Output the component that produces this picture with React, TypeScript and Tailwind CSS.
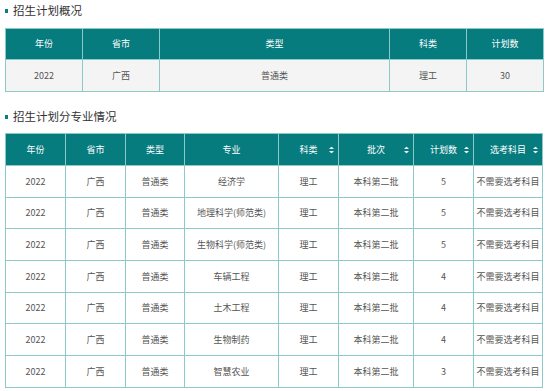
import React from "react";

const font = { fontFamily: '"Noto Sans CJK SC", "Noto Sans", sans-serif' };

function SortIcon() {
  return (
    <svg width="5" height="7" viewBox="0 0 5 7" className="absolute right-[4px] top-1/2 -translate-y-1/2">
      <path d="M2.5 0 L5 2.6 L0 2.6 Z" fill="#e6f3f3" />
      <path d="M2.5 7 L5 4.4 L0 4.4 Z" fill="#e6f3f3" />
    </svg>
  );
}

function Title({ text }: { text: string }) {
  return (
    <div className="flex items-center h-[22px] pl-[5px]">
      <span className="w-[3px] h-[4px] bg-[#0a7d80] mr-[5px]" />
      <span className="text-[11.5px] text-[#333]">{text}</span>
    </div>
  );
}

const rows = [
  { m: "经济学", n: "5", h: "h-[32px]" },
  { m: "地理科学(师范类)", n: "5", h: "h-[31px]" },
  { m: "生物科学(师范类)", n: "5", h: "h-[32px]" },
  { m: "车辆工程", n: "4", h: "h-[32px]" },
  { m: "土木工程", n: "4", h: "h-[31px]" },
  { m: "生物制药", n: "4", h: "h-[32px]" },
  { m: "智慧农业", n: "3", h: "h-[32px]" },
];

const heads2 = [
  { t: "年份", w: "w-[60px]" },
  { t: "省市", w: "w-[60px]" },
  { t: "类型", w: "w-[59px]" },
  { t: "专业", w: "w-[94px]" },
  { t: "科类", w: "w-[60px]", s: true },
  { t: "批次", w: "w-[75px]", s: true },
  { t: "计划数", w: "w-[60px]", s: true },
  { t: "选考科目", w: "w-[69px]", s: true },
];

export default function App() {
  return (
    <div className="w-[550px] h-[391px] bg-white overflow-hidden" style={font}>
      <Title text="招生计划概况" />

      <table className="ml-[5px] mt-[6px] w-[538px] border-collapse table-fixed text-[9px] text-center">
        <thead>
          <tr className="bg-[#077c7f] text-white">
            {["年份", "省市", "类型", "科类", "计划数"].map((h, i) => (
              <th
                key={h}
                className={`font-normal h-[31px] border border-[#8ccaca] ${i === 2 ? "w-[230px]" : "w-[77px]"}`}
              >
                {h}
              </th>
            ))}
          </tr>
        </thead>
        <tbody>
          <tr className="bg-[#f4f4f4] text-[#555]">
            {["2022", "广西", "普通类", "理工", "30"].map((c, i) => (
              <td key={i} className="h-[32px] border border-[#8ccaca]">
                {c}
              </td>
            ))}
          </tr>
        </tbody>
      </table>

      <div className="mt-[14px]">
        <Title text="招生计划分专业情况" />
      </div>

      <table className="ml-[5px] mt-[5px] w-[537px] border-collapse table-fixed text-[9px] text-center">
        <thead>
          <tr className="bg-[#077c7f] text-white">
            {heads2.map((h) => (
              <th key={h.t} className={`relative font-normal h-[32px] border border-[#8ccaca] ${h.w}`}>
                {h.t}
                {h.s && <SortIcon />}
              </th>
            ))}
          </tr>
        </thead>
        <tbody>
          {rows.map((r, i) => (
            <tr key={i} className="bg-white text-[#555]">
              {["2022", "广西", "普通类", r.m, "理工", "本科第二批", r.n, "不需要选考科目"].map((c, j) => (
                <td key={j} className={`${r.h} border border-[#8ccaca] whitespace-nowrap`}>
                  {c}
                </td>
              ))}
            </tr>
          ))}
        </tbody>
      </table>
    </div>
  );
}
